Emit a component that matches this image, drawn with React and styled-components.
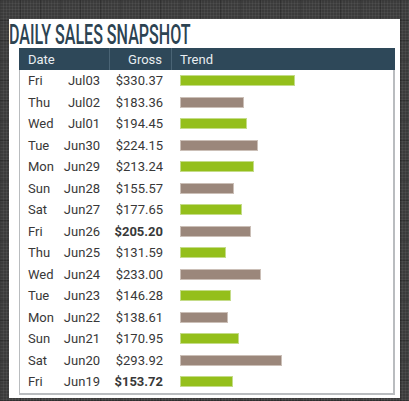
import React from 'react';
import styled, {createGlobalStyle} from 'styled-components';

const sales = [
  ["Fri", "Jul03", 330.37, false],
  ["Thu", "Jul02", 183.36, false],
  ["Wed", "Jul01", 194.45, false],
  ["Tue", "Jun30", 224.15, false],
  ["Mon", "Jun29", 213.24, false],
  ["Sun", "Jun28", 155.57, false],
  ["Sat", "Jun27", 177.65, false],
  ["Fri", "Jun26", 205.20, true],
  ["Thu", "Jun25", 131.59, false],
  ["Wed", "Jun24", 233.00, false],
  ["Tue", "Jun23", 146.28, false],
  ["Mon", "Jun22", 138.61, false],
  ["Sun", "Jun21", 170.95, false],
  ["Sat", "Jun20", 293.92, false],
  ["Fri", "Jun19", 153.72, true],
]

const GlobalStyle = createGlobalStyle`
  html, body {
    margin: 0;
    height: 100%;
  }
  body {
    background-color: #3b3b3b;
    background-image:
      linear-gradient(rgba(0,0,0,0.18) 1px, transparent 1px),
      linear-gradient(90deg, rgba(0,0,0,0.18) 1px, transparent 1px),
      linear-gradient(rgba(255,255,255,0.05) 1px, transparent 1px),
      linear-gradient(90deg, rgba(255,255,255,0.05) 1px, transparent 1px);
    background-size: 20px 20px, 20px 20px, 3px 3px, 3px 3px;
    font-family: Roboto, "Liberation Sans", sans-serif;
  }
`

class App extends React.Component {

  render() {
    return (
      <Page>
        <GlobalStyle />
        <Panel>
          <TitleRow>
            <Title>DAILY SALES SNAPSHOT</Title>
          </TitleRow>
          <Table>
            <HeadRow>
              <DateCell head>Date</DateCell>
              <GrossCell head>Gross</GrossCell>
              <TrendCell head>Trend</TrendCell>
            </HeadRow>
            {sales.map(([day, date, gross, bold], i) => (
              <Row key={date}>
                <DateCell>
                  <span>{day}</span>
                  <span>{date}</span>
                </DateCell>
                <GrossCell bold={bold}>${gross.toFixed(2)}</GrossCell>
                <TrendCell>
                  <Bar even={i % 2 === 0} style={{width: Math.round(gross * 0.347) + 'px'}} />
                </TrendCell>
              </Row>
            ))}
          </Table>
        </Panel>
      </Page>
    )
  }
}

const Page = styled.div`
  padding: 19px 0 0 9px;
`

const Panel = styled.div`
  width: 391px;
  height: 379px;
  background: #fff;
  box-sizing: border-box;
  padding: 0 5px 0 10px;
`

const TitleRow = styled.div`
  height: 29px;
  margin-left: -10px;
  overflow: visible;
`

const Title = styled.h1`
  display: inline-block;
  margin: 0;
  font-family: Roboto, "Liberation Sans", sans-serif;
  font-weight: 500;
  font-size: 27px;
  line-height: 32px;
  color: #2c4352;
  transform: scaleX(0.595);
  transform-origin: left center;
  white-space: nowrap;
`

const Table = styled.div`
  border: 1px solid #b9bcbf;
  border-right-width: 2px;
  border-bottom-width: 2px;
  border-top: none;
  width: 376px;
  box-sizing: border-box;
`

const Row = styled.div`
  display: grid;
  grid-template-columns: 90px 62px 1fr;
  height: 21.5px;
  align-items: center;
  font-size: 13px;
  color: #383838;
`

const HeadRow = styled(Row)`
  height: 22px;
  background: #2e4859;
  color: #e9eef1;
  margin: 0 -2px 0 -1px;
  padding: 0 2px 0 1px;
`

const DateCell = styled.div`
  display: flex;
  justify-content: space-between;
  height: 100%;
  align-items: center;
  padding: 0 10px 0 8px;
  border-right: ${p => p.head ? '1px solid #4a6475' : 'none'};
`

const GrossCell = styled.div`
  text-align: right;
  padding-right: 9px;
  height: 100%;
  display: flex;
  align-items: center;
  justify-content: flex-end;
  font-weight: ${p => p.bold ? 700 : 400};
  border-right: ${p => p.head ? '1px solid #4a6475' : 'none'};
`

const TrendCell = styled.div`
  padding-left: 8px;
  height: 100%;
  display: flex;
  align-items: center;
`

const Bar = styled.div`
  height: 11px;
  box-sizing: border-box;
  background: ${p => p.even ? '#94bf1b' : '#9b877b'};
  border: 1px solid ${p => p.even ? '#c4dc88' : '#cbbfb7'};
`

export default App
